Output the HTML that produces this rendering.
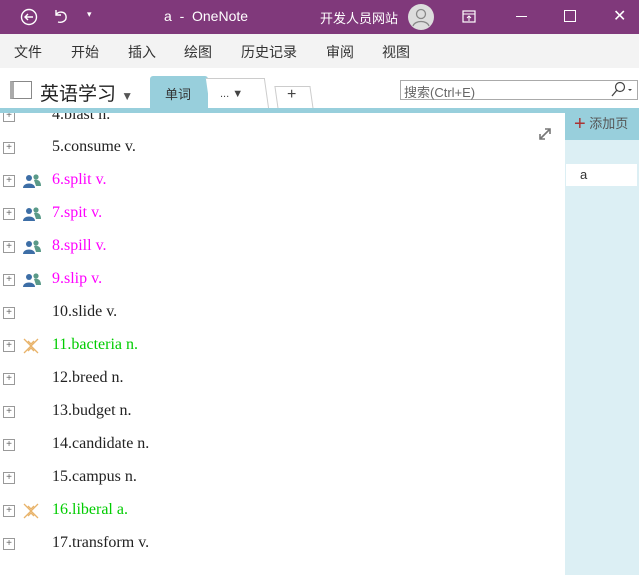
<!DOCTYPE html>
<html><head><meta charset="utf-8"><style>
body{margin:0;width:639px;height:575px;overflow:hidden;background:#fff;font-family:"Liberation Sans","Noto Sans CJK SC",sans-serif;position:relative}
.a{position:absolute}
.title{left:0;top:0;width:639px;height:34px;background:#80397b;color:#fff}
.ribbon{left:0;top:34px;width:639px;height:34px;background:#f3f3f3;border-bottom:1px solid #ddd;font-size:14px;color:#333}
.ribbon span{position:absolute;top:8px}
.nb{left:0;top:68px;width:639px;height:40px;background:#fff}
.strip{left:0;top:108px;width:639px;height:5px;background:#98cfdc}
.row{position:absolute;left:0;height:20px;font-family:"Liberation Serif",serif;font-size:16px}
.row .pb{position:absolute;left:3px;top:4px;width:10px;height:10px;border:1px solid #999;font:10px/10px "Liberation Sans";color:#666;text-align:center}
.row .t{position:absolute;left:52px;top:0;white-space:nowrap}
.ic{position:absolute;left:23px;top:2px}
#c{position:absolute;left:0;top:113px;width:565px;height:462px;overflow:hidden}
</style></head><body>
<div class="a title">
<svg class="a" style="left:20px;top:8px" width="18" height="18"><circle cx="9" cy="9" r="7.5" fill="none" stroke="#fff" stroke-width="1.4"/><path d="M13 9H5M8 6L5 9l3 3" stroke="#fff" stroke-width="1.4" fill="none"/></svg>
<svg class="a" style="left:52px;top:7px" width="18" height="18"><path d="M4 3v5h5M4 8c2-4 9-4 10 1s-4 7-8 6" stroke="#fff" stroke-width="1.4" fill="none"/></svg>
<div class="a" style="left:87px;top:9px;font-size:9px">▾</div>
<div class="a" style="left:164px;top:8px;font-size:14px">a&nbsp; -&nbsp; OneNote</div>
<div class="a" style="left:320px;top:8px;font-size:13px">开发人员网站</div>
<div class="a" style="left:408px;top:4px;width:26px;height:26px;border-radius:50%;background:#ddd"><svg width="26" height="26"><circle cx="13" cy="10" r="4.5" fill="none" stroke="#888" stroke-width="1.3"/><path d="M5 22c2-6 14-6 16 0" fill="none" stroke="#888" stroke-width="1.3"/></svg></div>
<svg class="a" style="left:462px;top:10px" width="14" height="13"><rect x="1" y="1" width="12" height="11" fill="none" stroke="#fff" stroke-width="1.2"/><path d="M1 4h12M7 11V6M5 8l2-2 2 2" stroke="#fff" fill="none"/></svg>
<div class="a" style="left:516px;top:16px;width:11px;height:1px;background:#fff"></div>
<div class="a" style="left:564px;top:10px;width:10px;height:10px;border:1px solid #fff"></div>
<div class="a" style="left:613px;top:6px;font-size:16px">✕</div>
</div>
<div class="a ribbon"><span style="left:14px">文件</span><span style="left:71px">开始</span><span style="left:128px">插入</span><span style="left:184px">绘图</span><span style="left:241px">历史记录</span><span style="left:326px">审阅</span><span style="left:382px">视图</span></div>
<div class="a nb">
<div class="a" style="left:10px;top:13px;width:22px;height:18px;border:1px solid #888;border-left:4px solid #aaa;box-sizing:border-box"></div>
<div class="a" style="left:40px;top:11px;font-size:19px;color:#222">英语学习 <span style="font-size:12px;color:#555">▼</span></div>
<div class="a" style="left:150px;top:8px;width:58px;height:32px;background:#98cfdc;border-radius:3px 3px 0 0"></div>
<div class="a" style="left:165px;top:16px;font-size:13px;color:#333">单词</div>
<div class="a" style="left:208px;top:10px;width:58px;height:30px;border:1px solid #ccc;border-bottom:none;border-left:none;background:#fff;transform:skewX(8deg)"></div>
<div class="a" style="left:220px;top:20px;font-size:11px;color:#444">... ▼</div>
<div class="a" style="left:276px;top:18px;width:34px;height:22px;border:1px solid #ccc;border-bottom:none;transform:skewX(8deg)"></div>
<div class="a" style="left:287px;top:18px;font-size:16px;color:#444">+</div>
<div class="a" style="left:400px;top:12px;width:238px;height:20px;border:1px solid #aaa;box-sizing:border-box;font-size:13px;color:#666;padding:1px 3px">搜索(Ctrl+E)</div>
<svg class="a" style="left:609px;top:13px" width="28" height="18"><circle cx="11" cy="6" r="4.5" fill="none" stroke="#444" stroke-width="1.2"/><path d="M8 9L3 15" stroke="#444" stroke-width="1.3"/><path d="M19 8l2 2 2-2z" fill="#444"/></svg>
</div>
<div class="a strip"></div>
<div class="a" style="left:565px;top:113px;width:74px;height:462px;background:#dceff4"></div>
<div class="a" style="left:565px;top:108px;width:74px;height:32px;background:#98cfdc"></div>
<div class="a" style="left:574px;top:113px;font-size:13px;color:#555"><span style="font-size:20px;color:#a33;vertical-align:-2px">+</span> 添加页</div>
<div class="a" style="left:566px;top:164px;width:71px;height:22px;background:#fff;font-size:13px;color:#333;line-height:22px;padding-left:14px;box-sizing:border-box">a</div>
<div id="c">
<div class="row" style="top:-7px"><div class="pb">+</div><div class="t" style="color:#222">4.blast n.</div></div>
<div class="row" style="top:25px"><div class="pb">+</div><div class="t" style="color:#222">5.consume v.</div></div>
<div class="row" style="top:58px"><div class="pb">+</div><svg class="ic" width="18" height="16"><circle cx="6" cy="5" r="3" fill="#3d6ea6"/><path d="M0 15c0-6 12-6 12 0z" fill="#3d6ea6"/><circle cx="13" cy="4" r="2.6" fill="#5a9a88"/><path d="M11 7c5-1 7 2 7 6h-5z" fill="#5a9a88"/></svg><div class="t" style="color:#f0f">6.split v.</div></div>
<div class="row" style="top:91px"><div class="pb">+</div><svg class="ic" width="18" height="16"><circle cx="6" cy="5" r="3" fill="#3d6ea6"/><path d="M0 15c0-6 12-6 12 0z" fill="#3d6ea6"/><circle cx="13" cy="4" r="2.6" fill="#5a9a88"/><path d="M11 7c5-1 7 2 7 6h-5z" fill="#5a9a88"/></svg><div class="t" style="color:#f0f">7.spit v.</div></div>
<div class="row" style="top:124px"><div class="pb">+</div><svg class="ic" width="18" height="16"><circle cx="6" cy="5" r="3" fill="#3d6ea6"/><path d="M0 15c0-6 12-6 12 0z" fill="#3d6ea6"/><circle cx="13" cy="4" r="2.6" fill="#5a9a88"/><path d="M11 7c5-1 7 2 7 6h-5z" fill="#5a9a88"/></svg><div class="t" style="color:#f0f">8.spill v.</div></div>
<div class="row" style="top:157px"><div class="pb">+</div><svg class="ic" width="18" height="16"><circle cx="6" cy="5" r="3" fill="#3d6ea6"/><path d="M0 15c0-6 12-6 12 0z" fill="#3d6ea6"/><circle cx="13" cy="4" r="2.6" fill="#5a9a88"/><path d="M11 7c5-1 7 2 7 6h-5z" fill="#5a9a88"/></svg><div class="t" style="color:#f0f">9.slip v.</div></div>
<div class="row" style="top:190px"><div class="pb">+</div><div class="t" style="color:#222">10.slide v.</div></div>
<div class="row" style="top:223px"><div class="pb">+</div><svg class="ic" width="16" height="16"><path d="M1 1l14 14M15 1L1 15M5 3l3 3 3-3M5 13l3-3 3 3" stroke="#e8b36a" stroke-width="1.3" fill="none"/></svg><div class="t" style="color:#0c0">11.bacteria n.</div></div>
<div class="row" style="top:256px"><div class="pb">+</div><div class="t" style="color:#222">12.breed n.</div></div>
<div class="row" style="top:289px"><div class="pb">+</div><div class="t" style="color:#222">13.budget n.</div></div>
<div class="row" style="top:322px"><div class="pb">+</div><div class="t" style="color:#222">14.candidate n.</div></div>
<div class="row" style="top:355px"><div class="pb">+</div><div class="t" style="color:#222">15.campus n.</div></div>
<div class="row" style="top:388px"><div class="pb">+</div><svg class="ic" width="16" height="16"><path d="M1 1l14 14M15 1L1 15M5 3l3 3 3-3M5 13l3-3 3 3" stroke="#e8b36a" stroke-width="1.3" fill="none"/></svg><div class="t" style="color:#0c0">16.liberal a.</div></div>
<div class="row" style="top:421px"><div class="pb">+</div><div class="t" style="color:#222">17.transform v.</div></div>
<svg class="a" style="left:538px;top:14px" width="14" height="14"><path d="M2 12L12 2M7 2h5v5M2 7v5h5" stroke="#777" stroke-width="1.6" fill="none"/></svg>
</div>
</body></html>
